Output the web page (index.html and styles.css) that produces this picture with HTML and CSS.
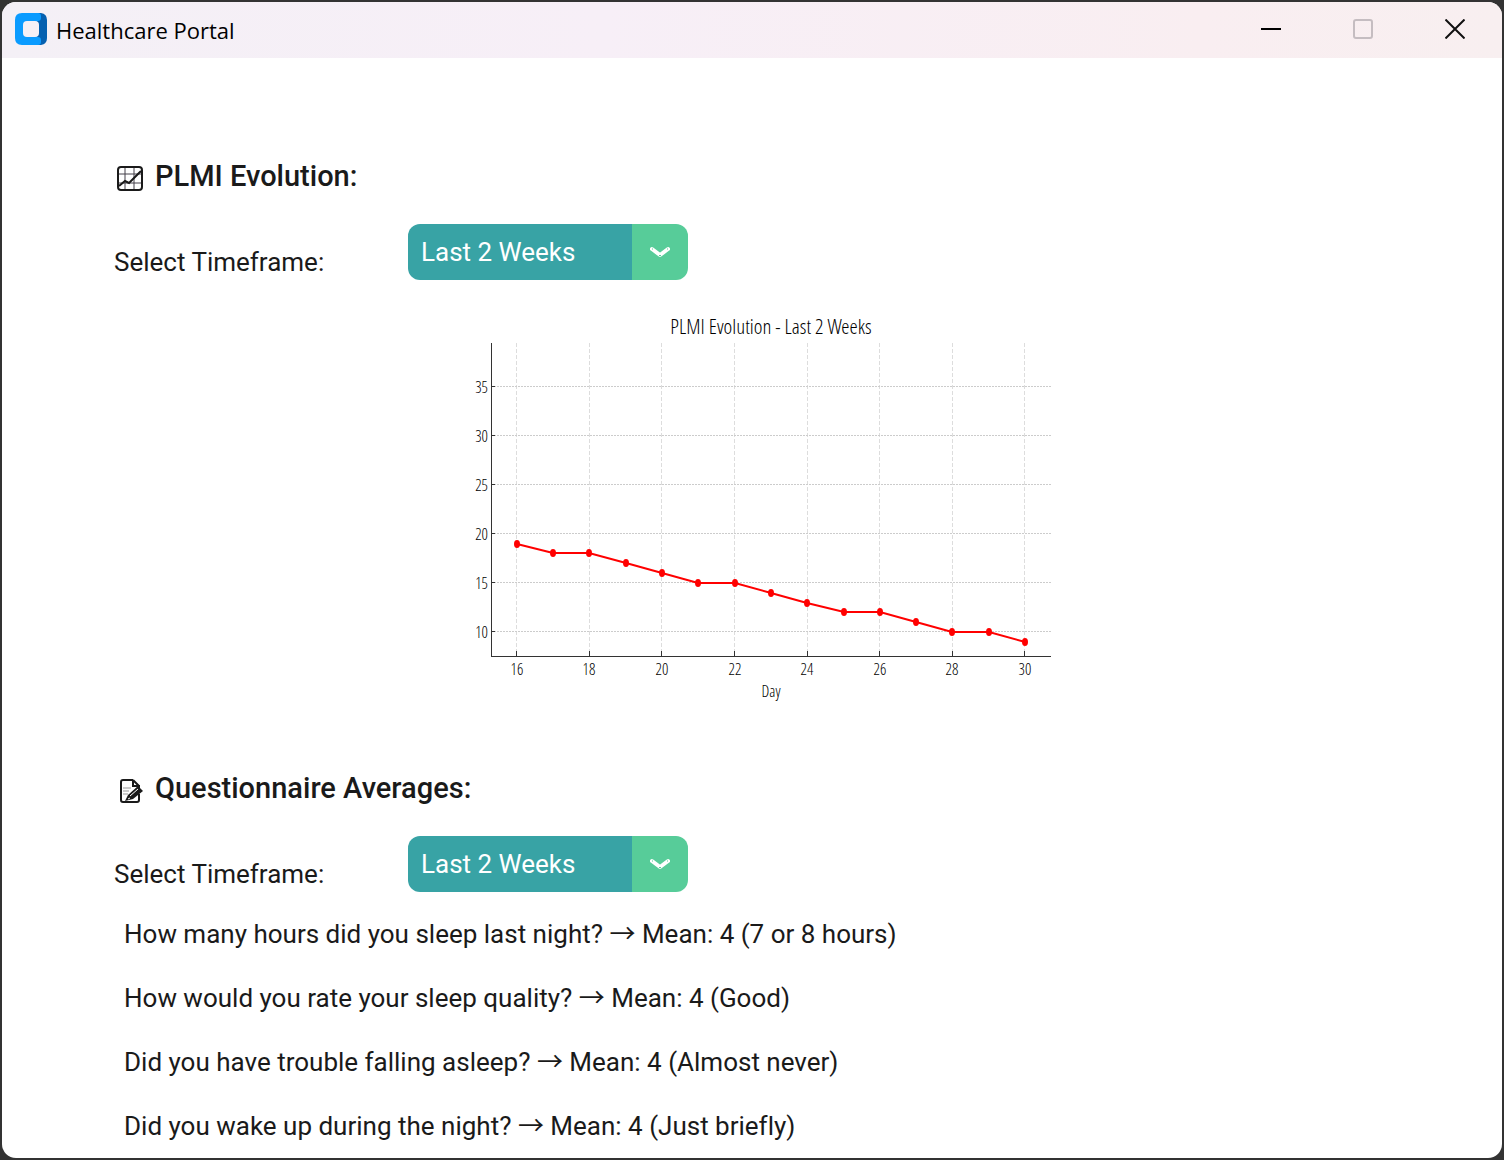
FILE: index.html
```html
<!DOCTYPE html>
<html lang="en">
<head>
<meta charset="utf-8">
<title>Healthcare Portal</title>
<link rel="stylesheet" href="styles.css">
</head>
<body>
<div class="window">
  <header class="titlebar">
    <svg class="app-icon" viewBox="0 0 32 32" aria-hidden="true">
      <path d="M20 0h6q6 1 6 7v18q0 6-6 7h-6z" fill="#0560b0"/>
      <path d="M7 0h16a3 3 0 0 1 3 3v2q0 3-3 3h-1v16h1q3 0 3 3v2a3 3 0 0 1-3 3H7q-7 0-7-7V7q0-7 7-7z" fill="#0a9bff"/>
      <rect x="8" y="8" width="16" height="16" rx="4" fill="#f5f0f6"/>
    </svg>
    <h1 class="window-title">Healthcare Portal</h1>
    <div class="window-controls">
      <button class="control" type="button" aria-label="Minimize"><svg viewBox="0 0 20 20"><path d="M0 10h20" stroke="#000" stroke-width="2"/></svg></button>
      <button class="control" type="button" aria-label="Maximize" disabled><svg viewBox="0 0 20 20"><rect x="1" y="1" width="18" height="18" rx="2" fill="none" stroke="#c5bdc1" stroke-width="2"/></svg></button>
      <button class="control" type="button" aria-label="Close"><svg viewBox="0 0 20 20"><path d="M0.500 0.500l19 19M19.500 0.500l-19 19" stroke="#111" stroke-width="2"/></svg></button>
    </div>
  </header>

  <main class="content">
    <section class="section">
      <h2 class="heading">
        <svg class="heading-icon" viewBox="0 0 28 28" fill="none" stroke="#1a1a1a" aria-hidden="true">
          <path d="M9 2v23M18 2v23M2 9h24M2 18h24" stroke-width="1" stroke="#45414a"/>
          <rect x="2" y="2" width="24" height="23" rx="3" stroke-width="2"/>
          <path d="M3 21l6-5 4 2L25 6" stroke-width="2"/>
        </svg>
        PLMI Evolution:
      </h2>
      <div class="field">
        <label class="field-label" for="plmi-range">Select Timeframe:</label>
        <div class="dropdown">
          <select class="dropdown-select" id="plmi-range"><option>Last 2 Weeks</option></select>
          <svg class="dropdown-arrow" viewBox="0 0 20 12" aria-hidden="true"><path d="M2 3l8 6 8-6" fill="none" stroke="#fff" stroke-width="4" stroke-linecap="round" stroke-linejoin="round"/><path d="M9 9l1 1 1-1M2 3h1M17 3h1" fill="none" stroke="#57cc99"/></svg>
        </div>
      </div>
      <svg class="chart" viewBox="0 0 600 400" role="img" aria-label="PLMI Evolution - Last 2 Weeks">
        <text class="chart-title" x="311" y="24">PLMI Evolution - Last 2 Weeks</text>
        <path class="grid-line grid-x" d="M56 33V346M129 33V346M201 33V346M274 33V346M347 33V346M419 33V346M492 33V346M564 33V346"/>
        <path class="grid-line grid-y" d="M31 76H591M31 125H591M31 174H591M31 223H591M31 272H591M31 321H591"/>
        <path class="tick" d="M56 346v-5M129 346v-5M201 346v-5M274 346v-5M347 346v-5M419 346v-5M492 346v-5M564 346v-5M31 76h4M31 125h4M31 174h4M31 223h4M31 272h4M31 321h4"/>
        <path class="axis" d="M31 33V346H591"/>
        <g class="y-labels">
          <text x="28" y="83">35</text><text x="28" y="132">30</text><text x="28" y="181">25</text>
          <text x="28" y="230">20</text><text x="28" y="279">15</text><text x="28" y="328">10</text>
        </g>
        <g class="x-labels">
          <text x="57" y="365">16</text><text x="129" y="365">18</text><text x="202" y="365">20</text><text x="275" y="365">22</text>
          <text x="347" y="365">24</text><text x="420" y="365">26</text><text x="492" y="365">28</text><text x="565" y="365">30</text>
          <text x="311" y="387">Day</text>
        </g>
        <polyline class="series" points="57,234 93,243 129,243 166,253 202,263 238,273 275,273 311,283 347,293 384,302 420,302 456,312 492,322 529,322 565,332"/>
        <g class="points">
          <ellipse cx="57" cy="234" rx="3" ry="4"/><ellipse cx="93" cy="243" rx="3" ry="4"/><ellipse cx="129" cy="243" rx="3" ry="4"/>
          <ellipse cx="166" cy="253" rx="3" ry="4"/><ellipse cx="202" cy="263" rx="3" ry="4"/><ellipse cx="238" cy="273" rx="3" ry="4"/>
          <ellipse cx="275" cy="273" rx="3" ry="4"/><ellipse cx="311" cy="283" rx="3" ry="4"/><ellipse cx="347" cy="293" rx="3" ry="4"/>
          <ellipse cx="384" cy="302" rx="3" ry="4"/><ellipse cx="420" cy="302" rx="3" ry="4"/><ellipse cx="456" cy="312" rx="3" ry="4"/>
          <ellipse cx="492" cy="322" rx="3" ry="4"/><ellipse cx="529" cy="322" rx="3" ry="4"/><ellipse cx="565" cy="332" rx="3" ry="4"/>
        </g>
      </svg>
    </section>

    <section class="section">
      <h2 class="heading">
        <svg class="heading-icon" viewBox="0 0 28 28" fill="none" stroke="#1a1a1a" aria-hidden="true">
          <path d="M17 3H7q-2 0-2 2v18q0 2 2 2h14q2 0 2-2v-6M17 3v6h6v2M17 3l6 6" stroke-width="2"/>
          <path d="M7 11h8M7 14h6M7 17h5" stroke="#999"/>
          <path d="M12 18L22 9l5 5-10 8-8 2z" fill="#1a1a1a" stroke="none"/>
          <path d="M14 19l8-7M12 22l2-1" stroke="#fff" stroke-width="1"/>
        </svg>
        Questionnaire Averages:
      </h2>
      <div class="field">
        <label class="field-label" for="survey-range">Select Timeframe:</label>
        <div class="dropdown">
          <select class="dropdown-select" id="survey-range"><option>Last 2 Weeks</option></select>
          <svg class="dropdown-arrow" viewBox="0 0 20 12" aria-hidden="true"><path d="M2 3l8 6 8-6" fill="none" stroke="#fff" stroke-width="4" stroke-linecap="round" stroke-linejoin="round"/><path d="M9 9l1 1 1-1M2 3h1M17 3h1" fill="none" stroke="#57cc99"/></svg>
        </div>
      </div>
      <ul class="answers">
        <li>How many hours did you sleep last night? <span class="arrow">→</span> Mean: 4 (7 or 8 hours)</li>
        <li>How would you rate your sleep quality? <span class="arrow">→</span> Mean: 4 (Good)</li>
        <li>Did you have trouble falling asleep? <span class="arrow">→</span> Mean: 4 (Almost never)</li>
        <li>Did you wake up during the night? <span class="arrow">→</span> Mean: 4 (Just briefly)</li>
      </ul>
    </section>
  </main>
</div>
</body>
</html>
```
FILE: styles.css
```css
* { box-sizing: border-box; }

body {
  margin: 0;
  padding: 2px;
  min-height: 100vh;
  display: flex;
  background: #333;
  color: #1a1a1a;
  font-family: Roboto, sans-serif;
  font-size: 26px;
  font-variant-ligatures: none;
}

.window {
  flex: 1;
  background: #fff;
  border-radius: 14px;
  overflow: hidden;
}

.titlebar {
  display: flex;
  align-items: center;
  height: 56px;
  padding: 0 1px 2px 13px;
  background: linear-gradient(90deg, #f4f0f6, #f7eff7 40%, #f9eef1 80%, #f8eff0);
}

.app-icon { width: 32px; height: 32px; }

.window-title {
  flex: 1;
  margin: 2px 0 0 9px;
  font: 400 22px "Open Sans", sans-serif;
  color: #000;
}

.window-controls { display: flex; }

.control {
  display: grid;
  place-items: center;
  width: 92px;
  height: 54px;
  padding: 0;
  border: 0;
  background: none;
}

.control svg { width: 20px; height: 20px; }

.content { padding: 100px 112px 16px; }

.section + .section { margin-top: 60px; }

.heading {
  display: flex;
  align-items: center;
  gap: 11px;
  height: 36px;
  margin: 0;
  font-size: 29px;
  font-weight: 500;
}

.heading-icon { width: 28px; height: 28px; margin: 6px 0 0 2px; }

.field {
  display: flex;
  align-items: center;
  margin-top: 30px;
}

.field-label { width: 294px; padding-top: 20px; }

.dropdown {
  display: grid;
  grid-template-columns: 224px 56px;
  height: 56px;
}

.dropdown-select {
  grid-area: 1 / 1 / 2 / 3;
  appearance: none;
  padding: 0 56px 0 13px;
  border: 0;
  border-radius: 12px;
  background: linear-gradient(90deg, #38a3a5 224px, #57cc99 224px);
  color: #fff;
  font: inherit;
}

.dropdown-arrow {
  grid-area: 1 / 2;
  place-self: center;
  width: 20px;
  height: 12px;
  pointer-events: none;
}

.chart {
  display: block;
  width: 600px;
  height: 400px;
  margin: 30px 0 0 346px;
  font-family: "Open Sans Condensed Light", "DejaVu Sans Condensed", sans-serif;
  font-size: 16px;
  fill: #000;
}

.chart-title { font-size: 21px; text-anchor: middle; }
.x-labels { text-anchor: middle; }
.y-labels { text-anchor: end; }
.grid-line { fill: none; stroke: #ddd; shape-rendering: crispEdges; }
.grid-x { stroke-dasharray: 4 2; }
.grid-y { stroke: #ccc; stroke-dasharray: 2 1; }
.axis, .tick { fill: none; stroke: #333; shape-rendering: crispEdges; }
.series { fill: none; stroke: #f00; stroke-width: 2; }
.points { fill: #f00; }

.answers {
  display: grid;
  gap: 32px;
  margin: 26px 0 0;
  padding: 0 0 0 10px;
  list-style: none;
  line-height: 32px;
}

.arrow {
  font-family: "Noto Sans CJK JP", sans-serif;
  line-height: 0;
}
```
